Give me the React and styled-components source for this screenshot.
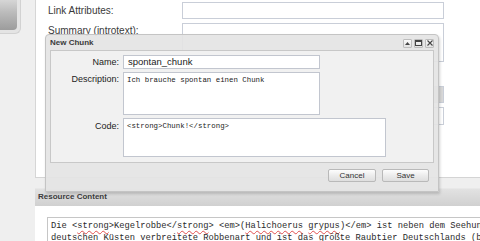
import React from "react";
import styled, { createGlobalStyle } from "styled-components";

const GlobalStyle = createGlobalStyle`
  html, body {
    margin: 0;
    padding: 0;
    background: #efefef;
    font-family: "Liberation Sans", Arial, sans-serif;
  }
`;

const Page = styled.div`
  position: relative;
  display: flex;
  width: 480px;
  height: 241px;
  overflow: hidden;
  background: #efefef;
`;

const Sidebar = styled.div`
  width: 35px;
  flex-shrink: 0;
`;

const SideTab = styled.div`
  width: 20px;
  height: 33px;
  background: #e4e4e4;
  border-right: 1px solid #d2d2d2;
  border-bottom: 1px solid #d2d2d2;
  border-radius: 0 0 6px 0;
  div {
    width: 17px;
    height: 30px;
    border-radius: 0 0 4px 0;
    background: linear-gradient(#d6d6d6, #bcbcbc 40%, #9c9c9c);
  }
`;

const Main = styled.div`
  flex: 1;
  min-width: 0;
  display: flex;
  flex-direction: column;
`;

const FormPanel = styled.div`
  flex-shrink: 0;
  height: 175px;
  padding-top: 2px;
  background: #fff;
  border-left: 1px solid #d6d6d6;
  border-bottom: 1px solid #d4d4d4;
  padding-left: 12px;
  display: grid;
  grid-template-columns: 134px 262px;
  grid-auto-rows: min-content;
  row-gap: 4px;
`;

const FieldLabel = styled.label`
  font-size: 10px;
  color: #3a3a3a;
  line-height: ${(p) => p.$lh || 17}px;
  white-space: nowrap;
`;

const Field = styled.div`
  box-sizing: border-box;
  height: ${(p) => p.$h}px;
  margin-top: ${(p) => p.$mt || 0}px;
  border: 1px solid #c9ced8;
  background: ${(p) => (p.$select ? "linear-gradient(90deg,#fff 96%,#d8d8d8 96%)" : "#fff")};
`;

const Gap = styled.div`
  flex-shrink: 0;
  height: 10px;
`;

const ContentPanel = styled.div`
  flex: 1;
  min-height: 0;
  overflow: hidden;
  background: #fff;
`;

const ContentHead = styled.div`
  height: 17px;
  padding-left: 3px;
  background: linear-gradient(#e2e2e2, #d0d0d0);
  border-top: 1px solid #e8e8e8;
  font-size: 8px;
  font-weight: bold;
  color: #3c3c3c;
  line-height: 16px;
`;

const ContentBody = styled.div`
  padding: 11px 0 0 12px;
`;

const CodeArea = styled.div`
  border: 1px solid #c6c6c6;
  border-right: none;
  padding: 2px 0 0 3px;
  font-family: "Liberation Mono", "Courier New", monospace;
  font-size: 8.75px;
  line-height: 12px;
  color: #2a2a2a;
  white-space: pre;
`;

const Spell = styled.span`
  text-decoration: underline wavy #e05050;
  text-decoration-thickness: 1px;
  text-underline-offset: 2px;
`;

/* ---- dialog ---- */

const Dialog = styled.div`
  position: absolute;
  left: 45px;
  top: 34px;
  width: 394px;
  height: 158px;
  box-sizing: border-box;
  background: rgba(228, 228, 228, 0.92);
  border: 1px solid #c4c4c4;
  border-radius: 4px 4px 0 0;
  box-shadow: 1px 2px 3px rgba(0, 0, 0, 0.18);
  display: flex;
  flex-direction: column;
`;

const TitleBar = styled.div`
  height: 15px;
  display: flex;
  align-items: center;
  justify-content: space-between;
  padding: 0 4px 0 4px;
  font-size: 8px;
  font-weight: bold;
  color: #3a3a3a;
`;

const Tools = styled.div`
  display: flex;
  gap: 2px;
  margin-top: 1px;
`;

const ToolBtn = styled.div`
  width: 9px;
  height: 9px;
  box-sizing: border-box;
  border: 1px solid #bdbdbd;
  border-radius: 1px;
  background: linear-gradient(#fafafa, #e2e2e2);
  display: flex;
  align-items: center;
  justify-content: center;
`;

const DialogBody = styled.div`
  margin: 0 4px;
  height: 113px;
  box-sizing: border-box;
  border: 1px solid #c8c8c8;
  background: #f1f1f1;
  padding-top: 4px;
  display: grid;
  grid-template-columns: 68px 1fr;
  column-gap: 4px;
  row-gap: 3px;
  grid-auto-rows: min-content;
`;

const DLabel = styled.label`
  text-align: right;
  font-size: 9px;
  color: #222;
  line-height: ${(p) => p.$lh || 14}px;
`;

const DInput = styled.div`
  box-sizing: border-box;
  width: ${(p) => p.$w}px;
  height: ${(p) => p.$h}px;
  border: 1px solid #c2c6cf;
  background: #fff;
  padding: ${(p) => (p.$mono ? "3px 3px" : "0 4px")};
  font-family: ${(p) =>
    p.$mono ? '"Liberation Mono", "Courier New", monospace' : '"Liberation Sans", Arial, sans-serif'};
  font-size: ${(p) => (p.$mono ? "7.4px" : "9.5px")};
  line-height: ${(p) => (p.$mono ? "9px" : "12px")};
  color: #222;
  white-space: pre;
`;

const Footer = styled.div`
  flex: 1;
  display: flex;
  justify-content: flex-end;
  align-items: flex-start;
  gap: 6px;
  padding: 6px 9px 0 0;
`;

const Button = styled.div`
  width: ${(p) => p.$w}px;
  height: 13px;
  box-sizing: border-box;
  border: 1px solid #b9b9b9;
  border-radius: 2px;
  background: linear-gradient(#fdfdfd, #ececec 50%, #dedede);
  font-size: 8px;
  color: #333;
  text-align: center;
  line-height: 11px;
`;

export default function App() {
  return (
    <Page>
      <GlobalStyle />
      <Sidebar>
        <SideTab>
          <div />
        </SideTab>
      </Sidebar>
      <Main>
        <FormPanel>
          <FieldLabel>Link Attributes:</FieldLabel>
          <Field $h={17} />
          <FieldLabel $lh={15}>Summary (introtext):</FieldLabel>
          <Field $h={39} />
          <span />
          <Field $h={17} $mt={20} $select />
          <span />
          <Field $h={18} />
        </FormPanel>
        <Gap />
        <ContentPanel>
          <ContentHead>Resource Content</ContentHead>
          <ContentBody>
            <CodeArea>
              {"Die <"}
              <Spell>strong</Spell>
              {">Kegelrobbe</"}
              <Spell>strong</Spell>
              {"> <em>("}
              <Spell>Halichoerus</Spell> <Spell>grypus</Spell>
              {")</em> ist neben dem Seehund\ndeutschen Küsten verbreitete "}
              <Spell>Robbenart</Spell>
              {" und ist das größte Raubtier Deutschlands (b"}
            </CodeArea>
          </ContentBody>
        </ContentPanel>
      </Main>

      <Dialog>
        <TitleBar>
          New Chunk
          <Tools>
            <ToolBtn>
              <svg width="5" height="3" viewBox="0 0 5 3">
                <path d="M0 3 L2.5 0 L5 3 Z" fill="#444" />
              </svg>
            </ToolBtn>
            <ToolBtn>
              <svg width="7" height="6" viewBox="0 0 7 6">
                <rect x="0.5" y="0.5" width="6" height="5" fill="none" stroke="#444" />
                <line x1="0" y1="1.5" x2="7" y2="1.5" stroke="#444" />
              </svg>
            </ToolBtn>
            <ToolBtn>
              <svg width="6" height="6" viewBox="0 0 6 6">
                <path d="M0.5 0.5 L5.5 5.5 M5.5 0.5 L0.5 5.5" stroke="#444" strokeWidth="1.1" />
              </svg>
            </ToolBtn>
          </Tools>
        </TitleBar>
        <DialogBody>
          <DLabel>Name:</DLabel>
          <DInput $w={197} $h={14}>spontan_chunk</DInput>
          <DLabel>Description:</DLabel>
          <DInput $w={197} $h={43} $mono>Ich brauche spontan einen Chunk</DInput>
          <DLabel $lh={16}>Code:</DLabel>
          <DInput $w={263} $h={39} $mono>{"<strong>Chunk!</strong>"}</DInput>
        </DialogBody>
        <Footer>
          <Button $w={48}>Cancel</Button>
          <Button $w={47}>Save</Button>
        </Footer>
      </Dialog>
    </Page>
  );
}
